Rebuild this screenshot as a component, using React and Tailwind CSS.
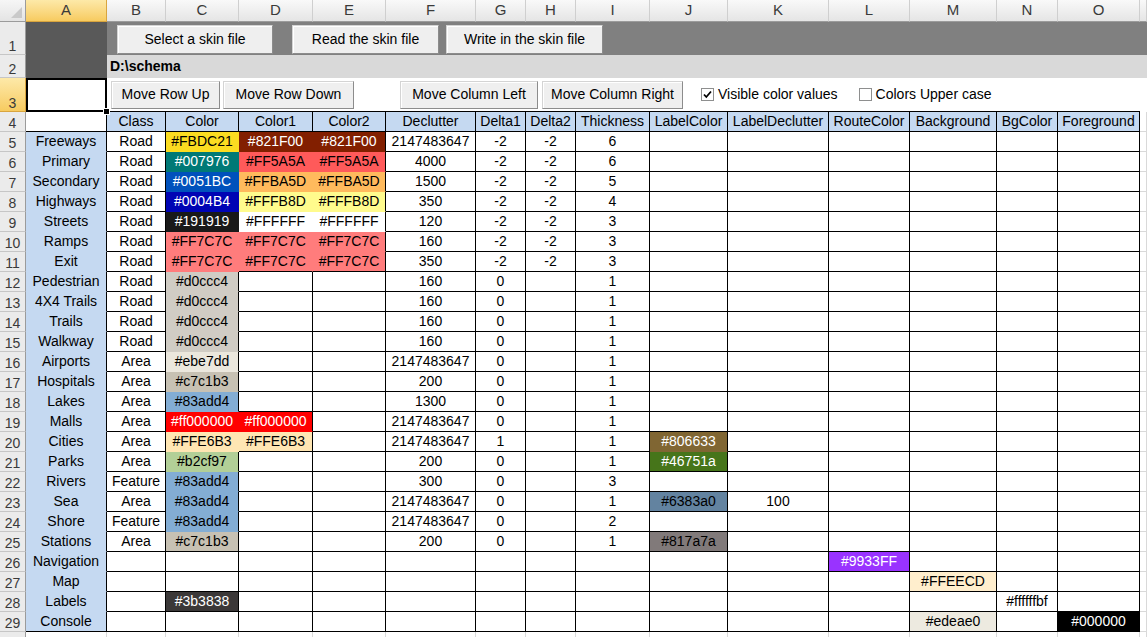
import React from 'react'

const GRID =
  'grid grid-cols-[26px_81px_59px_73px_74px_73px_90px_50px_50px_74px_78px_101px_81px_87px_61px_82px_1fr] grid-rows-[22px_33px_23px_34px_repeat(27,20px)]'

const LETTERS = ['A', 'B', 'C', 'D', 'E', 'F', 'G', 'H', 'I', 'J', 'K', 'L', 'M', 'N', 'O', '']

const HEADERS = ['Class', 'Color', 'Color1', 'Color2', 'Declutter', 'Delta1', 'Delta2', 'Thickness', 'LabelColor', 'LabelDeclutter', 'RouteColor', 'Background', 'BgColor', 'Foreground']

// fill, right edge, bottom edge, text colour for each colour value that shows a fill
const FILL = {
  '#FBDC21': ['bg-[#FBDC21]', 'border-r-[#FBDC21]', 'border-b-[#FBDC21]', 'text-black'],
  '#821F00': ['bg-[#821F00]', 'border-r-[#821F00]', 'border-b-[#821F00]', 'text-white'],
  '#007976': ['bg-[#007976]', 'border-r-[#007976]', 'border-b-[#007976]', 'text-white'],
  '#FF5A5A': ['bg-[#FF5A5A]', 'border-r-[#FF5A5A]', 'border-b-[#FF5A5A]', 'text-black'],
  '#0051BC': ['bg-[#0051BC]', 'border-r-[#0051BC]', 'border-b-[#0051BC]', 'text-white'],
  '#FFBA5D': ['bg-[#FFBA5D]', 'border-r-[#FFBA5D]', 'border-b-[#FFBA5D]', 'text-black'],
  '#0004B4': ['bg-[#0004B4]', 'border-r-[#0004B4]', 'border-b-[#0004B4]', 'text-white'],
  '#FFFB8D': ['bg-[#FFFB8D]', 'border-r-[#FFFB8D]', 'border-b-[#FFFB8D]', 'text-black'],
  '#191919': ['bg-[#191919]', 'border-r-[#191919]', 'border-b-[#191919]', 'text-white'],
  '#FFFFFF': ['bg-[#FFFFFF]', 'border-r-[#FFFFFF]', 'border-b-[#FFFFFF]', 'text-black'],
  '#FF7C7C': ['bg-[#FF7C7C]', 'border-r-[#FF7C7C]', 'border-b-[#FF7C7C]', 'text-black'],
  '#d0ccc4': ['bg-[#d0ccc4]', 'border-r-[#d0ccc4]', 'border-b-[#d0ccc4]', 'text-black'],
  '#ebe7dd': ['bg-[#ebe7dd]', 'border-r-[#ebe7dd]', 'border-b-[#ebe7dd]', 'text-black'],
  '#c7c1b3': ['bg-[#c7c1b3]', 'border-r-[#c7c1b3]', 'border-b-[#c7c1b3]', 'text-black'],
  '#83add4': ['bg-[#83add4]', 'border-r-[#83add4]', 'border-b-[#83add4]', 'text-black'],
  '#ff000000': ['bg-[#ff0000]', 'border-r-[#ff0000]', 'border-b-[#ff0000]', 'text-white'],
  '#FFE6B3': ['bg-[#FFE6B3]', 'border-r-[#FFE6B3]', 'border-b-[#FFE6B3]', 'text-black'],
  '#806633': ['bg-[#806633]', 'border-r-[#806633]', 'border-b-[#806633]', 'text-white'],
  '#b2cf97': ['bg-[#b2cf97]', 'border-r-[#b2cf97]', 'border-b-[#b2cf97]', 'text-black'],
  '#46751a': ['bg-[#46751a]', 'border-r-[#46751a]', 'border-b-[#46751a]', 'text-white'],
  '#6383a0': ['bg-[#6383a0]', 'border-r-[#6383a0]', 'border-b-[#6383a0]', 'text-black'],
  '#817a7a': ['bg-[#817a7a]', 'border-r-[#817a7a]', 'border-b-[#817a7a]', 'text-black'],
  '#9933FF': ['bg-[#9933FF]', 'border-r-[#9933FF]', 'border-b-[#9933FF]', 'text-white'],
  '#FFEECD': ['bg-[#FFEECD]', 'border-r-[#FFEECD]', 'border-b-[#FFEECD]', 'text-black'],
  '#3b3838': ['bg-[#3b3838]', 'border-r-[#3b3838]', 'border-b-[#3b3838]', 'text-white'],
  '#edeae0': ['bg-[#edeae0]', 'border-r-[#edeae0]', 'border-b-[#edeae0]', 'text-black'],
  '#000000': ['bg-[#000000]', 'border-r-[#000000]', 'border-b-[#000000]', 'text-white'],
}

const R = '#FF7C7C'
const ROWS = [
  ['Freeways', 'Road', '#FBDC21', '#821F00', '#821F00', '2147483647', '-2', '-2', '6'],
  ['Primary', 'Road', '#007976', '#FF5A5A', '#FF5A5A', '4000', '-2', '-2', '6'],
  ['Secondary', 'Road', '#0051BC', '#FFBA5D', '#FFBA5D', '1500', '-2', '-2', '5'],
  ['Highways', 'Road', '#0004B4', '#FFFB8D', '#FFFB8D', '350', '-2', '-2', '4'],
  ['Streets', 'Road', '#191919', '#FFFFFF', '#FFFFFF', '120', '-2', '-2', '3'],
  ['Ramps', 'Road', R, R, R, '160', '-2', '-2', '3'],
  ['Exit', 'Road', R, R, R, '350', '-2', '-2', '3'],
  ['Pedestrian', 'Road', '#d0ccc4', '', '', '160', '0', '', '1'],
  ['4X4 Trails', 'Road', '#d0ccc4', '', '', '160', '0', '', '1'],
  ['Trails', 'Road', '#d0ccc4', '', '', '160', '0', '', '1'],
  ['Walkway', 'Road', '#d0ccc4', '', '', '160', '0', '', '1'],
  ['Airports', 'Area', '#ebe7dd', '', '', '2147483647', '0', '', '1'],
  ['Hospitals', 'Area', '#c7c1b3', '', '', '200', '0', '', '1'],
  ['Lakes', 'Area', '#83add4', '', '', '1300', '0', '', '1'],
  ['Malls', 'Area', '#ff000000', '#ff000000', '', '2147483647', '0', '', '1'],
  ['Cities', 'Area', '#FFE6B3', '#FFE6B3', '', '2147483647', '1', '', '1', '#806633'],
  ['Parks', 'Area', '#b2cf97', '', '', '200', '0', '', '1', '#46751a'],
  ['Rivers', 'Feature', '#83add4', '', '', '300', '0', '', '3'],
  ['Sea', 'Area', '#83add4', '', '', '2147483647', '0', '', '1', '#6383a0', '100'],
  ['Shore', 'Feature', '#83add4', '', '', '2147483647', '0', '', '2'],
  ['Stations', 'Area', '#c7c1b3', '', '', '200', '0', '', '1', '#817a7a'],
  ['Navigation', '', '', '', '', '', '', '', '', '', '', '#9933FF'],
  ['Map', '', '', '', '', '', '', '', '', '', '', '', '#FFEECD'],
  ['Labels', '', '#3b3838', '', '', '', '', '', '', '', '', '', '', '#ffffffbf'],
  ['Console', '', '', '', '', '', '', '', '', '', '', '', '#edeae0', '', '#000000'],
]

const isFill = (v) => !!FILL[v]
const cellAt = (r, c) => (r < ROWS.length && c < 14 ? ROWS[r][c + 1] || '' : '')

const ROWHEAD =
  'flex items-end justify-center pb-[1px] border-b border-r border-b-[#c6c6c6] border-r-[#9b9b9b] bg-[#ebebeb] text-[14px] text-[#3a3a3a] leading-none'
const ROWHEAD_SEL =
  'flex items-end justify-center pb-[1px] border-b border-r border-b-[#d9a53e] border-r-[#d9a53e] bg-linear-to-b from-[#fde9a8] to-[#f7cb5f] text-[14px] text-[#3a3a3a] leading-none'
const COLHEAD =
  'flex items-center justify-center border-b border-r border-b-[#9b9b9b] border-r-[#cfcfcf] bg-linear-to-b from-[#f9f9f9] to-[#e5e5e5] text-[15px] text-[#3a3a3a]'
const COLHEAD_SEL =
  'flex items-center justify-center border-b border-r border-b-[#d9a53e] border-r-[#d9a53e] bg-linear-to-b from-[#fde9a8] to-[#f7cb5f] text-[15px] text-[#3a3a3a]'
const BTN =
  'flex items-center justify-center border border-[#d4d4d4] border-r-[#8c8c8c] border-b-[#8c8c8c] bg-[#efefef] text-[14px] text-black shadow-[inset_1px_1px_0_#ffffff]'
const BLANK = 'bg-white border-b border-r border-b-[#d9d9d9] border-r-[#d9d9d9]'

function Check({ on, label }) {
  return (
    <div className="flex items-center">
      <div className="w-[13px] h-[13px] border border-[#8e8f8f] bg-white flex items-center justify-center">
        {on && (
          <svg width="9" height="9" viewBox="0 0 9 9">
            <path d="M1 4.5 L3.3 7 L8 1.5" fill="none" stroke="#000" strokeWidth="1.8" />
          </svg>
        )}
      </div>
      <span className="ml-[4px] text-[14px] text-black">{label}</span>
    </div>
  )
}

function DataCell({ r, c }) {
  const v = cellAt(r, c)
  const f = FILL[v]
  const right = f && isFill(cellAt(r, c + 1)) ? f[1] : 'border-r-black'
  const bottom = f && isFill(cellAt(r + 1, c)) ? f[2] : 'border-b-black'
  return (
    <div
      className={`flex items-center justify-center border-r border-b whitespace-nowrap overflow-hidden text-[14px] ${right} ${bottom} ${
        f ? `${f[0]} ${f[3]}` : 'bg-white text-black'
      }`}
    >
      {v}
    </div>
  )
}

export default function App() {
  return (
    <div className="w-[1147px] h-[637px] overflow-hidden bg-white font-['Liberation_Sans',Arial,sans-serif]">
      <div className={GRID}>
        {/* column letters */}
        <div className="relative border-b border-r border-b-[#9b9b9b] border-r-[#9b9b9b] bg-linear-to-b from-[#f6f6f6] to-[#e4e4e4]">
          <svg className="absolute right-[3px] bottom-[3px]" width="11" height="11" viewBox="0 0 11 11">
            <path d="M11 0 L11 11 L0 11 Z" fill="#c9c9c9" />
          </svg>
        </div>
        {LETTERS.map((l, i) => (
          <div key={i} className={l === 'A' ? COLHEAD_SEL : COLHEAD}>
            {l}
          </div>
        ))}

        {/* row 1 */}
        <div className={ROWHEAD}>1</div>
        <div className="row-span-2 bg-[#595959]" />
        <div className="col-span-15 bg-[#808080] flex items-center pl-[10px] pt-[2px]">
          <div className={`${BTN} w-[156px] h-[29px]`}>Select a skin file</div>
          <div className={`${BTN} w-[147px] h-[29px] ml-[19px]`}>Read the skin file</div>
          <div className={`${BTN} w-[157px] h-[29px] ml-[7px]`}>Write in the skin file</div>
        </div>

        {/* row 2 */}
        <div className={ROWHEAD}>2</div>
        <div className="col-span-15 bg-[#d9d9d9] flex items-center pl-[3px] text-[14px] font-bold text-black">
          D:\schema
        </div>

        {/* row 3 */}
        <div className={ROWHEAD_SEL}>3</div>
        <div className="relative z-10 bg-white border-2 border-black">
          <div className="absolute -right-[5px] -bottom-[5px] w-[7px] h-[7px] bg-black border border-white" />
        </div>
        <div className="col-span-14 bg-white border-b border-b-black flex items-center pl-[4px]">
          <div className={`${BTN} w-[109px] h-[28px]`}>Move Row Up</div>
          <div className={`${BTN} w-[131px] h-[28px] ml-[3px]`}>Move Row Down</div>
          <div className={`${BTN} w-[138px] h-[28px] ml-[46px]`}>Move Column Left</div>
          <div className={`${BTN} w-[141px] h-[28px] ml-[4px]`}>Move Column Right</div>
          <div className="ml-[18px]">
            <Check on label="Visible color values" />
          </div>
          <div className="ml-[21px]">
            <Check label="Colors Upper case" />
          </div>
        </div>
        <div className="bg-white" />

        {/* row 4 */}
        <div className={ROWHEAD}>4</div>
        <div className="bg-white border-r border-b border-black" />
        {HEADERS.map((h) => (
          <div
            key={h}
            className="flex items-center justify-center bg-[#c5d9f1] border-r border-b border-black text-[14px] text-black whitespace-nowrap"
          >
            {h}
          </div>
        ))}
        <div className={BLANK} />

        {/* rows 5-29 */}
        {ROWS.map((row, r) => (
          <React.Fragment key={r}>
            <div className={ROWHEAD}>{r + 5}</div>
            <div
              className={`flex items-center justify-center bg-[#c5d9f1] border-r border-b border-r-black text-[14px] text-black whitespace-nowrap ${
                r === ROWS.length - 1 ? 'border-b-black' : 'border-b-[#c5d9f1]'
              }`}
            >
              {row[0]}
            </div>
            {Array.from({ length: 14 }, (_, c) => (
              <DataCell key={c} r={r} c={c} />
            ))}
            <div className={BLANK} />
          </React.Fragment>
        ))}

        {/* row 30, cut by the window edge */}
        <div className={ROWHEAD} />
        {LETTERS.map((l, i) => (
          <div key={i} className={BLANK} />
        ))}
      </div>
    </div>
  )
}
